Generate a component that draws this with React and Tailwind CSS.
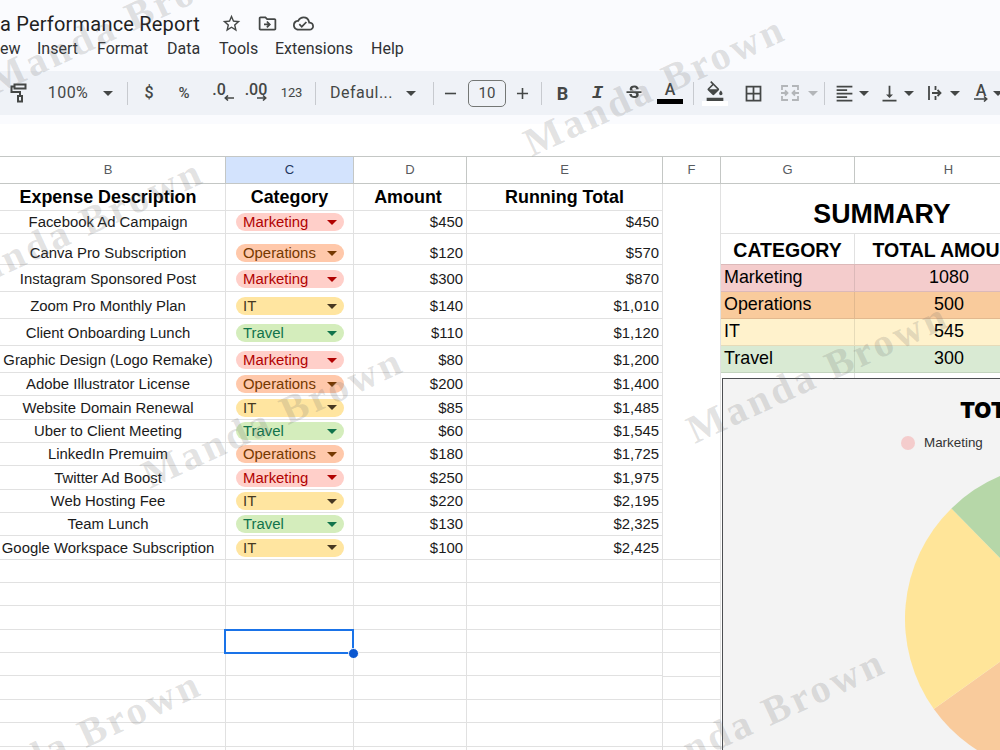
import clsx from 'clsx'
import {
  MdAdd,
  MdBorderAll,
  MdFormatAlignLeft,
  MdFormatColorFill,
  MdOutlineCloudDone,
  MdOutlineDriveFileMove,
  MdRemove,
  MdStarBorder,
  MdStrikethroughS,
  MdVerticalAlignBottom,
} from 'react-icons/md'

const MENU = [
  { label: 'ew', w: 'w-[37px]' },
  { label: 'Insert', w: 'w-[60px]' },
  { label: 'Format', w: 'w-[70px]' },
  { label: 'Data', w: 'w-[52px]' },
  { label: 'Tools', w: 'w-[56px]' },
  { label: 'Extensions', w: 'w-[96px]' },
  { label: 'Help', w: 'w-[40px]' },
]

const CHIPS = {
  Marketing: 'bg-[#ffcfc9] text-[#b10202]',
  Operations: 'bg-[#ffc8aa] text-[#753800]',
  IT: 'bg-[#ffe5a0] text-[#473821]',
  Travel: 'bg-[#d4edbc] text-[#11734b]',
}

const SHORT = 'h-[23.35px] pb-[2px]'
const TALL = 'h-[27px] pb-[3px]'

const ROWS = [
  { name: 'Facebook Ad Campaign', cat: 'Marketing', amount: '$450', total: '$450', size: 'h-[23px] pb-[2px]' },
  { name: 'Canva Pro Subscription', cat: 'Operations', amount: '$120', total: '$570', size: 'h-[31px] pb-[2px]' },
  { name: 'Instagram Sponsored Post', cat: 'Marketing', amount: '$300', total: '$870', size: TALL },
  { name: 'Zoom Pro Monthly Plan', cat: 'IT', amount: '$140', total: '$1,010', size: TALL },
  { name: 'Client Onboarding Lunch', cat: 'Travel', amount: '$110', total: '$1,120', size: TALL },
  { name: 'Graphic Design (Logo Remake)', cat: 'Marketing', amount: '$80', total: '$1,200', size: TALL },
  { name: 'Adobe Illustrator License', cat: 'Operations', amount: '$200', total: '$1,400', size: SHORT },
  { name: 'Website Domain Renewal', cat: 'IT', amount: '$85', total: '$1,485', size: SHORT },
  { name: 'Uber to Client Meeting', cat: 'Travel', amount: '$60', total: '$1,545', size: SHORT },
  { name: 'LinkedIn Premuim', cat: 'Operations', amount: '$180', total: '$1,725', size: SHORT },
  { name: 'Twitter Ad Boost', cat: 'Marketing', amount: '$250', total: '$1,975', size: SHORT },
  { name: 'Web Hosting Fee', cat: 'IT', amount: '$220', total: '$2,195', size: SHORT },
  { name: 'Team Lunch', cat: 'Travel', amount: '$130', total: '$2,325', size: SHORT },
  { name: 'Google Workspace Subscription', cat: 'IT', amount: '$100', total: '$2,425', size: SHORT },
]

const EMPTY = [0, 1, 2, 3, 4, 5, 6, 7, 8]
const SELECTED = 3

const SUMMARY = [
  { name: 'Marketing', value: 1080, color: 'bg-[#f4cccc] border-[#dcb9b9]' },
  { name: 'Operations', value: 500, color: 'bg-[#f9cb9c] border-[#e2b98f]' },
  { name: 'IT', value: 545, color: 'bg-[#fff2cc] border-[#e6dbb9]' },
  { name: 'Travel', value: 300, color: 'bg-[#d9ead3] border-[#c3d4be]' },
]

const WATERMARKS = [
  'left-[-5px] top-[62px]',
  'left-[532px] top-[124px]',
  'left-[-50px] top-[267px]',
  'left-[150px] top-[456px]',
  'left-[695px] top-[411px]',
  'left-[632px] top-[757px]',
  'left-[-52px] top-[779px]',
]

function Slot({ w, className, children }) {
  return <div className={clsx('flex h-full shrink-0 items-center justify-center', w, className)}>{children}</div>
}

function Caret({ className }) {
  return (
    <svg viewBox="0 0 10 5" className={clsx('h-[5px] w-[10px] shrink-0 fill-current', className)}>
      <path d="M0 0h10L5 5z" />
    </svg>
  )
}

function Divider() {
  return <div className="h-[23px] w-px shrink-0 bg-[#c7cacf]" />
}

function PaintRoller() {
  return (
    <svg viewBox="0 0 18 20" className="h-5 w-[18px] shrink-0 fill-none stroke-current stroke-2">
      <path d="M4.5 1.5h11v4h-11z" />
      <path d="M4.5 3.5h-3v5.5h8.500v4" />
      <path d="M8 13h4v5.500h-4z" />
    </svg>
  )
}

function Decimal({ text, right }) {
  return (
    <div className="relative h-5 shrink-0 text-[16px] leading-[13px] font-medium">
      {text}
      <svg
        viewBox="0 0 10 6"
        className={clsx('absolute top-[12px] h-[6px] w-[10px] fill-none stroke-current stroke-[1.6]', right ? 'right-0' : 'right-[-8px]')}
      >
        <path d={right ? 'M0 3h8.500M6 .5L8.700 3 6 5.500' : 'M10 3H1.500M4 .5L1.300 3 4 5.500'} />
      </svg>
    </div>
  )
}

function MergeIcon() {
  return (
    <svg viewBox="0 0 18 16" className="h-4 w-[18px] shrink-0 fill-none stroke-current stroke-[1.8]">
      <path d="M7 1H1v4M1 11v4h6M11 1h6v4M17 11v4h-6" />
      <path d="M0 8h6M4 5.500L6.500 8 4 10.500M18 8h-6M14 5.500L11.500 8l2.500 2.500" />
    </svg>
  )
}

function OverflowIcon() {
  return (
    <svg viewBox="0 0 14 14" className="h-[14px] w-[14px] shrink-0 fill-none stroke-current stroke-[1.8]">
      <path d="M1 0v14M7.500 0v4M7.500 10v4M4 7h8M9.500 4l3 3-3 3" />
    </svg>
  )
}

function Toolbar() {
  return (
    <div className="flex h-[44px] items-center bg-[#eff2f7] pb-0 text-[#444746]">
      <Slot w="w-[38px]"><PaintRoller /></Slot>
      <Slot w="w-[60px]" className="text-[16px] tracking-[0.5px]">100%</Slot>
      <Slot w="w-[20px]"><Caret /></Slot>
      <Slot w="w-[19px]"><Divider /></Slot>
      <Slot w="w-[24px]" className="text-[16px] font-medium">$</Slot>
      <Slot w="w-[46px]" className="text-[15px] font-medium">%</Slot>
      <Slot w="w-[24px]"><Decimal text=".0" /></Slot>
      <Slot w="w-[50px]"><Decimal text=".00" right /></Slot>
      <Slot w="w-[21px]" className="text-[13px] tracking-[-0.1px]">123</Slot>
      <Slot w="w-[26px]"><Divider /></Slot>
      <Slot w="w-[67px]" className="text-[16px] tracking-[0.5px]">Defaul...</Slot>
      <Slot w="w-[32px]"><Caret /></Slot>
      <Slot w="w-[12px]"><Divider /></Slot>
      <Slot w="w-[22px]"><MdRemove className="size-[19px] shrink-0" /></Slot>
      <Slot w="w-[52px]">
        <div className="flex h-[27px] w-[38px] items-center justify-center rounded-[5px] border border-[#747775] text-[15px]">10</div>
      </Slot>
      <Slot w="w-[18px]"><MdAdd className="size-[19px] shrink-0" /></Slot>
      <Slot w="w-[21px]"><Divider /></Slot>
      <Slot w="w-[21px]" className="text-[18px] font-bold">B</Slot>
      <Slot w="w-[45px]" className="ml-[2px] font-['Liberation_Mono'] text-[19px] font-bold italic">I</Slot>
      <Slot w="w-[28px]"><MdStrikethroughS className="size-[20px] shrink-0" /></Slot>
      <Slot w="w-[44px]" className="flex-col">
        <span className="text-[16px] leading-[15px] font-medium">A</span>
        <div className="mt-[2px] h-[5px] w-[26px] bg-black" />
      </Slot>
      <Slot w="w-[3px]"><Divider /></Slot>
      <Slot w="w-[40px]" className="flex-col">
        <MdFormatColorFill className="h-[20px] w-[20px] shrink-0" />
        <div className="h-[5px] w-[26px] bg-white" />
      </Slot>
      <Slot w="w-[36px]"><MdBorderAll className="size-[21px] shrink-0" /></Slot>
      <Slot w="w-[38px]" className="text-[#b3b6b9]"><MergeIcon /></Slot>
      <Slot w="w-[8px]" className="text-[#b3b6b9]"><Caret /></Slot>
      <Slot w="w-[15px]"><Divider /></Slot>
      <Slot w="w-[24px]"><MdFormatAlignLeft className="size-[21px] shrink-0" /></Slot>
      <Slot w="w-[16px]"><Caret /></Slot>
      <Slot w="w-[34px]"><MdVerticalAlignBottom className="size-[21px] shrink-0" /></Slot>
      <Slot w="w-[6px]"><Caret /></Slot>
      <Slot w="w-[30px]" className="ml-2"><OverflowIcon /></Slot>
      <Slot w="w-[10px]"><Caret /></Slot>
      <Slot w="w-[22px]" className="ml-[10px] flex-col">
        <span className="text-[16px] leading-[11px] font-medium">A</span>
        <svg viewBox="0 0 14 6" className="h-[6px] w-[14px] fill-none stroke-current stroke-[1.6]">
          <path d="M0 3h12M10 .5L12.700 3 10 5.500" />
        </svg>
      </Slot>
      <Slot w="w-[12px]"><Caret /></Slot>
    </div>
  )
}

function ColumnLetters() {
  const cell = 'flex shrink-0 items-center justify-center border-r border-[#c4c7c5]'
  return (
    <div className="flex h-[28px] border-y border-[#c4c7c5] text-[13px] text-[#575b5f]">
      <div className={clsx(cell, 'ml-[-9px] w-[235px]')}>B</div>
      <div className={clsx(cell, 'w-[128px] bg-[#d3e3fd] font-medium text-[#1f3760]')}>C</div>
      <div className={clsx(cell, 'w-[113px]')}>D</div>
      <div className={clsx(cell, 'w-[196px]')}>E</div>
      <div className={clsx(cell, 'w-[58px]')}>F</div>
      <div className={clsx(cell, 'w-[134px]')}>G</div>
      <div className={clsx(cell, 'w-[188px]')}>H</div>
    </div>
  )
}

function Chip({ cat }) {
  return (
    <div className={clsx('flex h-[18px] w-[108px] items-center justify-between rounded-full pr-[7px] pl-[7px] leading-[18px]', CHIPS[cat])}>
      <span>{cat}</span>
      <Caret />
    </div>
  )
}

function Row({ row }) {
  const cell = clsx('flex shrink-0 items-end border-r border-b border-[#e1e1e1] leading-[17px]', row.size)
  return (
    <div className="flex">
      <div className={clsx(cell, 'w-[235px] justify-center')}>{row.name}</div>
      <div className={clsx(cell, 'w-[128px] pl-[10px]')}><Chip cat={row.cat} /></div>
      <div className={clsx(cell, 'w-[113px] justify-end pr-[3px]')}>{row.amount}</div>
      <div className={clsx(cell, 'w-[196px] justify-end pr-[3px]')}>{row.total}</div>
    </div>
  )
}

function ExpenseTable() {
  const head = 'flex h-[27px] shrink-0 items-center justify-center border-r border-b border-[#e1e1e1]'
  const empty = 'h-[23.35px] shrink-0 border-r border-b border-[#e1e1e1]'
  return (
    <div className="ml-[-9px] w-[672px] shrink-0 text-[14.9px] text-[#1b1b1b]">
      <div className="flex text-[17.900px] font-bold text-black">
        <div className={clsx(head, 'w-[235px]')}>Expense Description</div>
        <div className={clsx(head, 'w-[128px]')}>Category</div>
        <div className={clsx(head, 'w-[113px] pr-[4px]')}>Amount</div>
        <div className={clsx(head, 'w-[196px]')}>Running Total</div>
      </div>
      {ROWS.map((row) => (
        <Row key={row.name} row={row} />
      ))}
      {EMPTY.map((i) => (
        <div key={i} className="flex">
          <div className={clsx(empty, 'w-[235px]')} />
          <div className={clsx(empty, 'relative w-[128px]')}>
            {i === SELECTED && (
              <div className="absolute top-[-1px] left-[-2px] z-10 h-[25px] w-[130px] border-2 border-[#1a73e8]">
                <div className="absolute right-[-7px] bottom-[-7px] size-[11px] rounded-full border border-white bg-[#0b57d0]" />
              </div>
            )}
          </div>
          <div className={clsx(empty, 'w-[113px]')} />
          <div className={clsx(empty, 'w-[196px]')} />
        </div>
      ))}
    </div>
  )
}

function SpacerColumn() {
  return (
    <div className="w-[58px] shrink-0">
      <div className="h-[375.8px] border-r border-b border-[#e1e1e1]" />
      {EMPTY.map((i) => (
        <div key={i} className="h-[23.35px] border-r border-b border-[#e1e1e1]" />
      ))}
    </div>
  )
}

function PieChart() {
  return (
    <div className="absolute top-[194px] left-[1px] h-[400px] w-[400px] border-[1.5px] border-[#4d4f52] bg-[#f3f3f3]">
      <div className="pt-[18px] pl-[237px] font-['Inter'] text-[22px] leading-[26px] font-black text-black">TOTAL</div>
      <div className="mt-[12px] flex items-center gap-[9px] pl-[178px] text-[13.400px] leading-[16px] text-[#333]">
        <span className="size-[14px] rounded-full bg-[#f4cccc]" />
        Marketing
      </div>
      <svg viewBox="-155 -155 310 310" className="absolute top-[84.700px] left-[182px] h-[310px] w-[310px]">
        <path d="M0 0V-155A155 155 0 0 1 52.300 146z" fill="#f4cccc" />
        <path d="M0 0L52.300 146A155 155 0 0 1 -126.200 90z" fill="#f9cb9c" />
        <path d="M0 0L-126.200 90A155 155 0 0 1 -108.600 -110.600z" fill="#ffe599" />
        <path d="M0 0L-108.600 -110.600A155 155 0 0 1 0 -155z" fill="#b6d7a8" />
      </svg>
    </div>
  )
}

function SummaryPanel() {
  return (
    <div className="relative w-[322px] shrink-0 text-black">
      <div className="flex h-[50px] items-end justify-center border-b border-[#e1e1e1] pb-[3px] text-[26.800px] leading-[32px] font-bold">
        SUMMARY
      </div>
      <div className="flex h-[31px] border-b border-[#dcb9b9] text-[19.500px] leading-[27px] font-bold">
        <div className="flex w-[134px] shrink-0 items-end justify-center border-r border-[#e1e1e1]">CATEGORY</div>
        <div className="flex w-[188px] shrink-0 items-end justify-center whitespace-nowrap">TOTAL AMOUNT</div>
      </div>
      {SUMMARY.map((s) => (
        <div key={s.name} className={clsx('flex h-[27px] items-stretch border-b text-[17.900px] leading-[25px]', s.color)}>
          <div className={clsx('w-[134px] shrink-0 border-r pl-[3px]', s.color)}>{s.name}</div>
          <div className="w-[188px] text-center">{s.value}</div>
        </div>
      ))}
      <div className="h-[6px] w-[134px] border-r border-[#e1e1e1]" />
      <PieChart />
    </div>
  )
}

export default function App() {
  return (
    <div className="relative h-[750px] w-[1000px] overflow-hidden bg-white font-['Liberation_Sans',sans-serif]">
      <header className="h-[124px] bg-[#fafbfe] font-['Roboto',sans-serif]">
        <div className="flex h-[36px] items-center pt-[11px] text-[#1f1f1f]">
          <span className="w-[221px] text-[20px] leading-[26px] tracking-[0.2px] whitespace-nowrap">a Performance Report</span>
          <div className="flex items-center gap-[15px] text-[#444746]">
            <MdStarBorder className="size-[21px]" />
            <MdOutlineDriveFileMove className="size-[21px]" />
            <MdOutlineCloudDone className="size-[21px]" />
          </div>
        </div>
        <nav className="flex h-[35px] pt-[3px] text-[16px] leading-[20px] text-[#303234]">
          {MENU.map((m) => (
            <span key={m.label} className={m.w}>{m.label}</span>
          ))}
        </nav>
        <Toolbar />
      </header>
      <main className="pt-[32px]">
        <ColumnLetters />
        <div className="flex">
          <ExpenseTable />
          <SpacerColumn />
          <SummaryPanel />
        </div>
      </main>
      <div className="pointer-events-none">
        {WATERMARKS.map((pos) => (
          <span
            key={pos}
            className={clsx(
              "absolute z-20 origin-[0_33.5px] rotate-[-24.8deg] font-['Liberation_Serif',serif] text-[40px] leading-none font-bold tracking-[3.3px] whitespace-nowrap text-[#6b6b6b]/20",
              pos,
            )}
          >
            Manda Brown
          </span>
        ))}
      </div>
    </div>
  )
}
